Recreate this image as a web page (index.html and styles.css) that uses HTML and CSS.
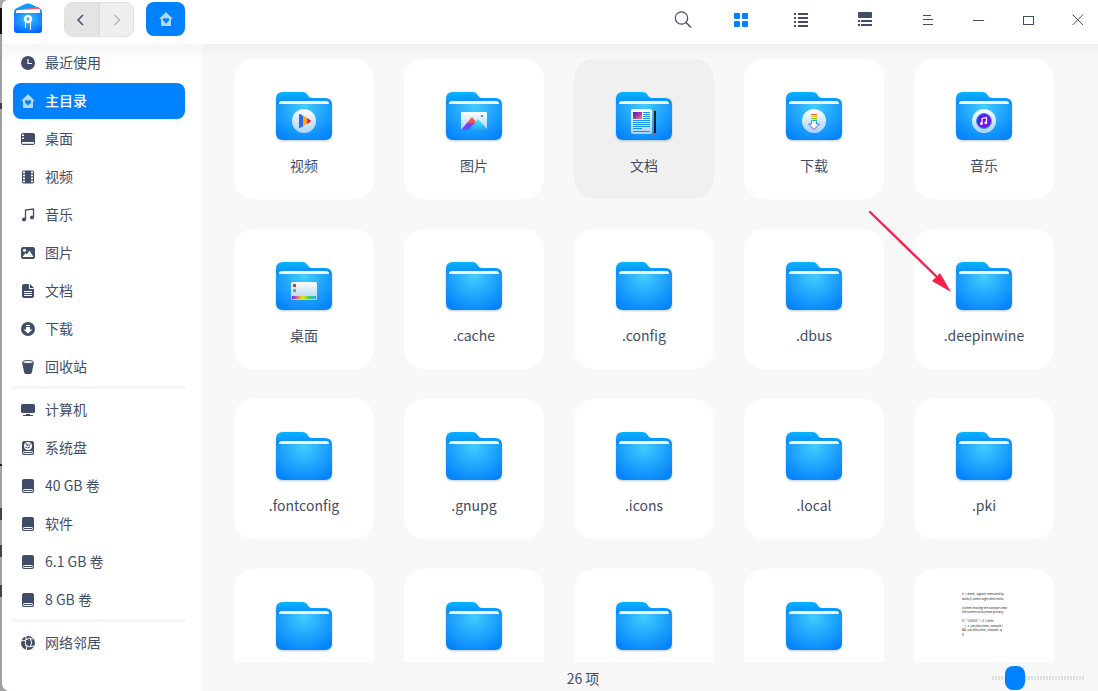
FILE: index.html
```html
<!DOCTYPE html>
<html lang="zh-CN">
<head>
<meta charset="utf-8">
<title>主目录</title>
<link rel="stylesheet" href="styles.css">
</head>
<body>
<svg class="sprite" width="0" height="0" aria-hidden="true">
  <defs>
    <linearGradient id="gBack" x1="0" y1="0" x2="0" y2="1"><stop offset="0" stop-color="#00b4ff"/><stop offset="1" stop-color="#1580ff"/></linearGradient>
    <radialGradient id="gFront" gradientUnits="userSpaceOnUse" cx="28" cy="14" r="38"><stop offset="0" stop-color="#42cdff"/><stop offset="1" stop-color="#0583fb"/></radialGradient>
    <linearGradient id="gPaper" x1="0" y1="0" x2="0" y2="1"><stop offset="0" stop-color="#ffffff"/><stop offset="1" stop-color="#a9d0f8"/></linearGradient>
    <linearGradient id="gRed" x1="0" y1="0" x2="0" y2="1"><stop offset="0" stop-color="#ff6a3a"/><stop offset=".4" stop-color="#f0524d"/><stop offset=".5" stop-color="#7b3df2"/><stop offset="1" stop-color="#5a53ff"/></linearGradient>
    <linearGradient id="gCyan" x1="0" y1="0" x2="0" y2="1"><stop offset="0" stop-color="#3df0ff"/><stop offset="1" stop-color="#149df5"/></linearGradient>
    <linearGradient id="gPhoto" x1="0" y1="0" x2="1" y2="1"><stop offset="0" stop-color="#4318d8"/><stop offset=".5" stop-color="#a0409a"/><stop offset="1" stop-color="#ff7a5c"/></linearGradient>
    <linearGradient id="gDock"><stop offset="0" stop-color="#8a1df0"/><stop offset=".25" stop-color="#d08a60"/><stop offset=".45" stop-color="#f2e600"/><stop offset=".7" stop-color="#4fcf60"/><stop offset="1" stop-color="#18b4ff"/></linearGradient>
    <linearGradient id="gDown" x1="0" y1="0" x2="0" y2="1"><stop offset="0" stop-color="#18b8a8"/><stop offset=".5" stop-color="#2f7bf0"/><stop offset="1" stop-color="#9b2df0"/></linearGradient>
    <linearGradient id="gMusic" x1="0" y1="0" x2="1" y2="1"><stop offset="0" stop-color="#4b18f5"/><stop offset="1" stop-color="#8a10f5"/></linearGradient>
    <radialGradient id="gLogo" cx=".5" cy=".3" r=".8"><stop offset="0" stop-color="#37c5ff"/><stop offset="1" stop-color="#005cff"/></radialGradient>
  </defs>
  <symbol id="folder" viewBox="0 0 56 48">
    <path d="M0 14V7Q0 0 7 0H26Q30 0 31.500 3Q33 6 36 6H49Q56 6 56 13V14Z" fill="url(#gBack)"/>
    <path d="M3 12.500V11.500Q3 9 6 9H50Q53 9 53 11.500V12.500Z" fill="#f0f8ff"/>
    <path d="M0 12H56V41Q56 48 49 48H7Q0 48 0 41Z" fill="url(#gFront)"/>
  </symbol>
  <symbol id="disk" viewBox="0 0 14 14">
    <path d="M1 2Q1 0 3 0H11Q13 0 13 2V12Q13 14 11 14H3Q1 14 1 12Z" fill="currentColor"/>
    <rect x="2.500" y="10.500" width="9" height="2" rx=".8" fill="none" stroke="#fff"/>
  </symbol>
  <symbol id="home" viewBox="0 0 14 14">
    <path d="M7 0L14 7H12V13Q12 14 11 14H3Q2 14 2 13V7H0Z" fill="#b3d9ff"/>
    <path d="M7 11.500L4.200 8.700Q3.400 7.500 4.300 6.500Q5.700 5.500 7 7Q8.300 5.500 9.700 6.500Q10.600 7.500 9.800 8.700Z" fill="#0081ff"/>
  </symbol>
</svg>

<div class="window">
  <header class="titlebar">
    <svg class="logo" viewBox="0 0 28 30" aria-hidden="true">
      <path d="M0 9Q0 6 3 5L12 .8Q14 0 16 .8L25 5Q28 6 28 9V14H0Z" fill="#0a9dff"/>
      <path d="M2 7L25 4L26 9H2Z" fill="#ff5878"/>
      <path d="M2 8Q3 7 5 7L25 6Q26 6 26 10H2Z" fill="#fff"/>
      <path d="M0 10H28V27Q28 30 25 30H3Q0 30 0 27Z" fill="url(#gLogo)"/>
      <circle cx="14" cy="16" r="3" fill="none" stroke="#fff" stroke-width="2.500"/>
      <path d="M11.500 20V25M16.500 19V27" stroke="#fff" fill="none"/>
    </svg>
    <div class="history">
      <button class="back" type="button" aria-label="后退"><svg width="18" height="18" viewBox="0 0 18 18"><path d="M10 4L5 9L10 14" stroke="#414d68" stroke-width="1.500" fill="none"/></svg></button>
      <button class="forward" type="button" aria-label="前进"><svg width="18" height="18" viewBox="0 0 18 18"><path d="M7.500 4L12.500 9L7.500 14" stroke="#b4b8c1" stroke-width="1.500" fill="none"/></svg></button>
    </div>
    <button class="crumb" type="button" aria-label="主目录"><svg width="14" height="14"><use href="#home"/></svg></button>

    <div class="tools">
      <button class="tool search" type="button" aria-label="搜索"><svg width="18" height="18" viewBox="0 0 18 18"><circle cx="7.500" cy="7" r="6.200" fill="none" stroke="#414d68" stroke-width="1.200"/><path d="M12 11.500L17 16.500" stroke="#414d68" stroke-width="1.400"/></svg></button>
      <button class="tool" type="button" aria-label="图标视图"><svg width="14" height="14" viewBox="0 0 14 14" fill="#0081ff"><rect width="6" height="6" rx="1"/><rect x="8" width="6" height="6" rx="1"/><rect y="8" width="6" height="6" rx="1"/><rect x="8" y="8" width="6" height="6" rx="1"/></svg></button>
      <button class="tool" type="button" aria-label="列表视图"><svg width="14" height="14" viewBox="0 0 14 14" fill="#414d68"><path d="M0 0h2v2H0zM4 0h10v2H4zM0 4h2v2H0zM4 4h10v2H4zM0 8h2v2H0zM4 8h10v2H4zM0 12h2v2H0zM4 12h10v2H4z"/></svg></button>
      <button class="tool details" type="button" aria-label="详情"><svg width="14" height="16" viewBox="0 0 14 16" fill="#414d68"><rect width="14" height="6" rx="1"/><path d="M0 8h2v2H0zM3 8h11v2H3zM0 12h2v2H0zM3 12h11v2H3z"/></svg></button>
    </div>
    <div class="controls">
      <button type="button" aria-label="菜单"><svg width="10" height="12" viewBox="0 0 10 12"><path d="M0 1.500H8M0 5.500H10M0 10.500H10" stroke="#414d68"/></svg></button>
      <button type="button" aria-label="最小化"><svg width="12" height="12" viewBox="0 0 12 12"><path d="M1 6.500H12" stroke="#414d68"/></svg></button>
      <button type="button" aria-label="最大化"><svg width="12" height="12" viewBox="0 0 12 12"><rect x="1.500" y="2.500" width="10" height="8" fill="none" stroke="#414d68"/></svg></button>
      <button type="button" aria-label="关闭"><svg width="12" height="12" viewBox="0 0 12 12"><path d="M.5 .5L11 11M11 .5L.5 11" stroke="#414d68"/></svg></button>
    </div>
  </header>

  <div class="body">
    <nav class="sidebar">
      <a href="#"><svg class="ico" viewBox="0 0 14 14"><circle cx="7" cy="7" r="7" fill="currentColor"/><path d="M7 3V7.500H11" fill="none" stroke="#fff" stroke-width="1.200"/></svg>最近使用</a>
      <a href="#" class="active"><svg class="ico"><use href="#home"/></svg>主目录</a>
      <a href="#"><svg class="ico" viewBox="0 0 14 14"><rect y="1" width="14" height="12" rx="2" fill="currentColor"/><path d="M1 2.500h2v1.500H1zM1 5.500h2v1.500H1zM1 10h12v1.700H1z" fill="#fff"/></svg>桌面</a>
      <a href="#"><svg class="ico" viewBox="0 0 14 14"><rect x="1" y=".5" width="12" height="13" rx="1.500" fill="currentColor"/><path d="M3 1.500V13M11 1.500V13" stroke="#fff" stroke-width="2" stroke-dasharray="1.800 1.200"/></svg>视频</a>
      <a href="#"><svg class="ico" viewBox="0 0 14 14"><path d="M4.500 11.500V2L12.500 1V9.500" fill="none" stroke="currentColor" stroke-width="1.300"/><circle cx="3" cy="11.500" r="2" fill="currentColor"/><circle cx="11" cy="9.500" r="2" fill="currentColor"/></svg>音乐</a>
      <a href="#"><svg class="ico" viewBox="0 0 14 14"><rect y="1" width="14" height="12" rx="2" fill="currentColor"/><circle cx="3.500" cy="4.300" r="1.500" fill="#fff"/><path d="M1.500 11L4.500 7L6 8.500L8.500 4.500L12.500 11Z" fill="#fff"/></svg>图片</a>
      <a href="#"><svg class="ico" viewBox="0 0 14 14"><path d="M1 2Q1 0 3 0H8V5H13V12Q13 14 11 14H3Q1 14 1 12ZM9 0L13 4H9Z" fill="currentColor"/><path d="M3 7.500H11M3 9.500H11M3 11.500H11" stroke="#fff"/></svg>文档</a>
      <a href="#"><svg class="ico" viewBox="0 0 14 14"><circle cx="7" cy="7" r="7" fill="currentColor"/><path d="M5 3h4v1H5zM5 5h4v2.500h2.500L7 11.500L2.500 7.500H5z" fill="#fff"/></svg>下载</a>
      <a href="#"><svg class="ico" viewBox="0 0 14 14"><path d="M1 2L3 12Q3.300 14 5 14H9Q10.700 14 11 12L13 2Z" fill="currentColor"/><ellipse cx="7" cy="2" rx="5.500" ry="1.500" fill="#fff" stroke="currentColor"/></svg>回收站</a>
      <hr>
      <a href="#"><svg class="ico" viewBox="0 0 14 14"><rect y="1" width="14" height="9" rx="1.500" fill="currentColor"/><path d="M5 11.500H9M2 12.500H12" stroke="currentColor"/></svg>计算机</a>
      <a href="#"><svg class="ico" viewBox="0 0 14 14"><use href="#disk"/><circle cx="7" cy="5" r="4" fill="#fff"/><path d="M5 2Q5 5 7.500 5Q9 4.500 9.500 2.500M4 6Q6.500 8 9 6M7 2.500V4" fill="none" stroke="#414d68" stroke-width=".9"/></svg>系统盘</a>
      <a href="#"><svg class="ico"><use href="#disk"/></svg>40 GB 卷</a>
      <a href="#"><svg class="ico"><use href="#disk"/></svg>软件</a>
      <a href="#"><svg class="ico"><use href="#disk"/></svg>6.1 GB 卷</a>
      <a href="#"><svg class="ico"><use href="#disk"/></svg>8 GB 卷</a>
      <hr>
      <a href="#"><svg class="ico" viewBox="0 0 14 14"><circle cx="7" cy="7" r="7" fill="currentColor"/><path d="M4.500 0Q6 2 4.500 4.500Q3.500 8 6 11L5 14M4.500 4Q8 1 12 3M4 9Q8 12 13.500 10M9.500 3Q12 7 9 11M0 5Q3 4 4.500 4.500" fill="none" stroke="#fff" stroke-width="1"/></svg>网络邻居</a>
    </nav>

    <main class="content">
      <ul class="files">
        <li><button type="button" class="file"><svg class="folder" viewBox="0 0 56 48"><use href="#folder"/><circle cx="28" cy="29" r="12" fill="url(#gPaper)"/><path d="M23 23Q23 22 24 22L27 23.800V34.200L24 36Q23 36 23 35Z" fill="#2a6af0"/><path d="M27 23.800L31 26V32L27 34.200Z" fill="#ffa90a"/><path d="M31 26L34.500 28.300Q35.500 29 34.500 29.700L31 32Z" fill="#f5125c"/></svg><span>视频</span></button></li>
        <li><button type="button" class="file"><svg class="folder" viewBox="0 0 56 48"><use href="#folder"/><rect x="15" y="20" width="26" height="18" rx="1" fill="url(#gPaper)"/><path d="M15 38L25 26Q26 24.500 27 26L31 31L25 38Z" fill="url(#gRed)"/><path d="M22 38L31 28Q32 26.500 33 28L41 37V38Z" fill="url(#gCyan)" opacity=".9"/><rect x="35" y="23" width="2" height="2" fill="#2996e8"/></svg><span>图片</span></button></li>
        <li><button type="button" class="file hovered"><svg class="folder" viewBox="0 0 56 48"><use href="#folder"/><rect x="15" y="17" width="21" height="25" rx="2" fill="url(#gPaper)"/><rect x="17" y="20" width="9" height="7" fill="url(#gPhoto)"/><path d="M27 20.500H34M27 22.500H34M27 24.500H34M27 26.500H34M17 28.500H34M17 30.500H34M17 32.500H34M17 34.500H34M17 36.500H26M17 39.500H34" stroke="#1591f2" stroke-width="1"/><path d="M38 19L39 16.500L40 19V41H38Z" fill="#1b1b24"/><path d="M38 19L39 16.500L40 19Z" fill="#d9a45a"/><path d="M38 41H40V43H38Z" fill="#d94a4a"/></svg><span>文档</span></button></li>
        <li><button type="button" class="file"><svg class="folder" viewBox="0 0 56 48"><use href="#folder"/><circle cx="28" cy="29" r="12" fill="url(#gPaper)"/><path d="M25 22.500H31" stroke="#f45a3c"/><path d="M25 24.500H31" stroke="#ffc400"/><path d="M25 26.500H31" stroke="#7ed321"/><path d="M25.500 28.500H30.500V32H33.500L28 37.500L22.500 32H25.500Z" fill="#fff" stroke="url(#gDown)"/></svg><span>下载</span></button></li>
        <li><button type="button" class="file"><svg class="folder" viewBox="0 0 56 48"><use href="#folder"/><circle cx="28" cy="29" r="12" fill="url(#gPaper)"/><circle cx="28" cy="29" r="7.500" fill="url(#gMusic)" stroke="#2f9ee8"/><path d="M26 32V26.500L30.500 25.500V31" fill="none" stroke="#fff" stroke-width="1.200"/><circle cx="25.300" cy="31.700" r="1.400" fill="#fff"/><circle cx="29.800" cy="30.800" r="1.400" fill="#fff"/></svg><span>音乐</span></button></li>

        <li><button type="button" class="file"><svg class="folder" viewBox="0 0 56 48"><use href="#folder"/><rect x="15" y="20" width="26" height="18" rx="1.500" fill="url(#gPaper)"/><rect x="17" y="22" width="3" height="3" rx=".5" fill="#d3304a"/><rect x="17" y="27" width="3" height="3" rx=".5" fill="#6db33f"/><rect x="16" y="34" width="24" height="3" fill="url(#gDock)"/></svg><span>桌面</span></button></li>
        <li><button type="button" class="file"><svg class="folder"><use href="#folder"/></svg><span>.cache</span></button></li>
        <li><button type="button" class="file"><svg class="folder"><use href="#folder"/></svg><span>.config</span></button></li>
        <li><button type="button" class="file"><svg class="folder"><use href="#folder"/></svg><span>.dbus</span></button></li>
        <li class="marked"><button type="button" class="file"><svg class="folder"><use href="#folder"/></svg><span>.deepinwine</span></button>
          <svg class="pointer" width="84" height="84" viewBox="0 0 84 84" aria-hidden="true"><path d="M2 2L70 68" stroke="#ff1f4b" stroke-width="2.400" stroke-linecap="round"/><path d="M83 82L72 63L64 71Z" fill="#ff1f4b"/></svg></li>

        <li><button type="button" class="file"><svg class="folder"><use href="#folder"/></svg><span>.fontconfig</span></button></li>
        <li><button type="button" class="file"><svg class="folder"><use href="#folder"/></svg><span>.gnupg</span></button></li>
        <li><button type="button" class="file"><svg class="folder"><use href="#folder"/></svg><span>.icons</span></button></li>
        <li><button type="button" class="file"><svg class="folder"><use href="#folder"/></svg><span>.local</span></button></li>
        <li><button type="button" class="file"><svg class="folder"><use href="#folder"/></svg><span>.pki</span></button></li>

        <li><button type="button" class="file"><svg class="folder"><use href="#folder"/></svg></button></li>
        <li><button type="button" class="file"><svg class="folder"><use href="#folder"/></svg></button></li>
        <li><button type="button" class="file"><svg class="folder"><use href="#folder"/></svg></button></li>
        <li><button type="button" class="file"><svg class="folder"><use href="#folder"/></svg></button></li>
        <li><button type="button" class="file textfile"><svg class="preview" width="64" height="50" viewBox="0 0 128 100"><text x="20" y="8"># ~/.bash_logout: executed by</text><text x="20" y="17">bash(1) when login shell exits.</text><text x="20" y="35"># when leaving the console clear</text><text x="20" y="44">the screen to increase privacy</text><text x="20" y="62">if [ "$SHLVL" = 1 ]; then</text><text x="26" y="71">[ -x /usr/bin/clear_console ]</text><text x="20" y="80">&amp;&amp; /usr/bin/clear_console -q</text><text x="20" y="89">fi</text></svg></button></li>
      </ul>
      <footer class="status">
        <span class="count">26 项</span>
        <input class="zoom" type="range" min="0" max="100" value="18" aria-label="图标大小">
      </footer>
    </main>
  </div>
</div>
</body>
</html>
```

FILE: styles.css
```css
* { box-sizing: border-box; }

body {
  margin: 0;
  height: 100vh;
  overflow: hidden;
  padding-left: 2px;
  font-family: "Noto Sans CJK SC", "Noto Sans", sans-serif;
  font-size: 14px;
  line-height: 20px;
  color: #414d68;
  background: linear-gradient(#aaa 8px, #111 8px 34px, #a0a0a0 34px 103px, #444 103px 109px, #a0a0a0 109px 464px, #222 464px 466px, #a0a0a0 466px 508px, #444 508px 520px, #a0a0a0 520px 545px, #444 545px 557px, #a0a0a0 557px 585px, #444 585px 597px, #a0a0a0 597px);
}

button {
  border: 0;
  padding: 0;
  font: inherit;
  color: inherit;
  background: none;
  display: flex;
  align-items: center;
  justify-content: center;
}

.sprite { position: absolute; }

.window {
  height: 100%;
  display: flex;
  flex-direction: column;
  background: #fff;
  border-radius: 6px 0 0 8px;
  overflow: hidden;
}

/* Title bar */
.titlebar {
  flex: none;
  height: 44px;
  display: flex;
  align-items: flex-start;
  padding: 2px 0 0 12px;
}
.logo { width: 28px; height: 30px; margin-top: 1px; }
.history {
  display: flex;
  margin: 0 12px 0 22px;
  width: 70px;
  height: 35px;
  border: 1px solid #e0e0e0;
  border-radius: 8px;
  overflow: hidden;
}
.back { flex: 1; background: #e4e4e4; border-right: 1px solid #dadada; }
.forward { flex: 1; background: #efefef; }
.crumb {
  width: 39px;
  height: 34px;
  border-radius: 8px;
  background: #0081ff;
}
.tools { display: flex; margin-left: auto; height: 36px; }
.tool { width: 60px; }
.search { width: 56px; }
.details { width: 68px; }
.controls { display: flex; gap: 10px; margin-left: 9px; height: 36px; }
.controls button { width: 40px; }

/* Places */
.body { flex: 1; min-height: 0; display: flex; }
.sidebar {
  flex: none;
  width: 200px;
  padding: 1px 17px 0 11px;
  background: linear-gradient(#f6f6f6, #fff 20px);
}
.sidebar a {
  display: flex;
  align-items: center;
  gap: 10px;
  height: 36px;
  margin-bottom: 2px;
  padding: 0 0 2px 8px;
  border-radius: 8px;
  color: inherit;
  text-decoration: none;
}
.sidebar .active { background: #0081ff; color: #fff; font-weight: 500; }
.sidebar hr {
  height: 3px;
  margin: -1px 0 3px -1px;
  border: 0;
  background: #f4f4f4;
}
.ico { flex: none; width: 14px; height: 14px; margin-top: 2px; }

/* Files */
.content {
  flex: 1;
  min-width: 0;
  display: flex;
  flex-direction: column;
  background: linear-gradient(#f0f0f0, #f8f8f8 16px);
}
.files {
  flex: 1;
  min-height: 0;
  overflow: hidden;
  margin: 0;
  padding: 15px 32px 0;
  list-style: none;
  display: grid;
  grid-template-columns: repeat(auto-fill, 140px);
  grid-auto-rows: 140px;
  gap: 30px;
}
.file {
  width: 100%;
  height: 100%;
  padding-top: 33px;
  flex-direction: column;
  justify-content: flex-start;
  gap: 15px;
  border-radius: 20px;
  background: #fff;
}
.hovered { background: #f0f0f0; }
.folder {
  width: 56px;
  height: 48px;
  flex: none;
  filter: drop-shadow(0 1px 1px rgba(0, 40, 100, .25));
}
.textfile { padding-top: 22px; }
.preview { font-size: 6px; fill: #222; }
.marked { position: relative; }
.pointer {
  position: absolute;
  left: -46px;
  top: -19px;
  pointer-events: none;
}

/* Status bar */
.status { flex: none; height: 29px; display: flex; align-items: center; padding: 3px 14px 0 0; }
.count { flex: 1; text-align: center; }
.zoom {
  appearance: none;
  width: 92px;
  height: 24px;
  margin: 0 0 0 28px;
  background: repeating-linear-gradient(90deg, #e0e0e0 0 2px, transparent 2px 3px) center / 100% 4px no-repeat;
}
.zoom::-webkit-slider-thumb {
  appearance: none;
  width: 20px;
  height: 24px;
  border-radius: 8px;
  background: #0081ff;
}
```
